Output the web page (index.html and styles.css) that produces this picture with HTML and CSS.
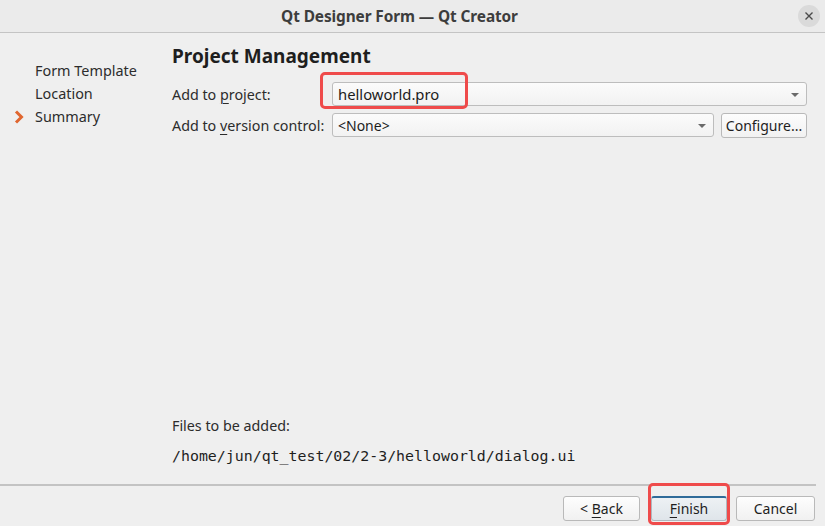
FILE: index.html
```html
<!DOCTYPE html>
<html>
<head>
<meta charset="utf-8">
<link rel="stylesheet" href="styles.css">
</head>
<body>
<div class="window">
  <header class="titlebar">
    <span class="spacer"></span>
    <span class="title">Qt Designer Form — Qt Creator</span>
    <span class="close">
      <svg width="10" height="10" viewBox="0 0 10 10"><path d="M1.5 1.5 L8.5 8.5 M8.5 1.5 L1.5 8.5" stroke="#4a4a4a" stroke-width="1.4" fill="none"/></svg>
    </span>
  </header>
  <div class="main">
    <nav class="sidebar">
      <div class="step">Form Template</div>
      <div class="step">Location</div>
      <div class="step current">
        <svg class="chev" width="10" height="14" viewBox="0 0 10 14"><path d="M2 1.5 L7.5 7 L2 12.5" stroke="#e0662f" stroke-width="3" fill="none" stroke-linejoin="miter"/></svg>
        Summary
      </div>
    </nav>
    <section class="content">
      <h1 class="heading">Project Management</h1>
      <div class="form">
        <div class="row">
          <label class="label">Add to <u>p</u>roject:</label>
          <div class="combo wide">
            <span>helloworld.pro</span>
            <span class="arrow"></span>
            <span class="mark mark-combo"></span>
          </div>
        </div>
        <div class="row">
          <label class="label">Add to <u>v</u>ersion control:</label>
          <div class="combo">
            <span>&lt;None&gt;</span>
            <span class="arrow"></span>
          </div>
          <button class="btn configure">Configure...</button>
        </div>
      </div>
      <div class="files">
        <div class="files-label">Files to be added:</div>
        <div class="path">/home/jun/qt_test/02/2-3/helloworld/dialog.ui</div>
      </div>
    </section>
  </div>
  <footer class="footer">
    <button class="btn">&lt; <u>B</u>ack</button>
    <button class="btn default"><u>F</u>inish<span class="mark mark-finish"></span></button>
    <button class="btn">Cancel</button>
  </footer>
</div>
</body>
</html>
```

FILE: styles.css
```css
* { box-sizing: border-box; }
html, body {
  margin: 0;
  padding: 0;
  width: 825px;
  height: 526px;
  overflow: hidden;
  background: #efefef;
  font-family: "Noto Sans", "DejaVu Sans", sans-serif;
  color: #2c2c2c;
}
.window {
  display: flex;
  flex-direction: column;
  height: 526px;
}
.titlebar {
  height: 33px;
  flex: none;
  background: #ebebeb;
  border-bottom: 1px solid #c4c4c4;
  display: grid;
  grid-template-columns: 1fr auto 1fr;
  align-items: center;
}
.title {
  font-weight: bold;
  font-size: 15.4px;
  color: #3d3d3d;
  letter-spacing: -0.1px;
  padding-top: 1px;
  margin-right: 26px;
}
.close {
  justify-self: end;
  margin-right: 5px;
  width: 22px;
  height: 22px;
  border-radius: 50%;
  background: #dadada;
  display: flex;
  align-items: center;
  justify-content: center;
}
.main {
  flex: 1;
  display: flex;
  min-height: 0;
}
.sidebar {
  width: 172px;
  flex: none;
  padding-top: 26px;
  font-size: 14.4px;
}
.step {
  position: relative;
  height: 23px;
  line-height: 23px;
  padding-left: 35px;
  color: #2c2c2c;
}
.chev {
  position: absolute;
  left: 14px;
  top: 5px;
}
.content {
  flex: 1;
  display: flex;
  flex-direction: column;
  padding-right: 18px;
}
.heading {
  margin: 10px 0 0 0;
  font-size: 19px;
  line-height: 26px;
  font-weight: bold;
  color: #1e1e1e;
}
.form {
  margin-top: 13px;
  display: flex;
  flex-direction: column;
  gap: 7px;
}
.row {
  display: flex;
  align-items: center;
  height: 24px;
}
.label {
  width: 160px;
  flex: none;
  font-size: 14.3px;
}
.label u { text-decoration-thickness: 1px; text-underline-offset: 3px; }
.combo {
  position: relative;
  flex: 1;
  height: 24px;
  border: 1px solid #bdbdbd;
  border-radius: 3px;
  background: linear-gradient(#fbfbfb, #f2f2f2);
  display: flex;
  align-items: center;
  padding-left: 5px;
  font-size: 14px;
  color: #1c1c1c;
}
.combo.wide span:first-child { font-size: 14.8px; }
.arrow {
  position: absolute;
  right: 7px;
  top: 10px;
  width: 0;
  height: 0;
  border-left: 4px solid transparent;
  border-right: 4px solid transparent;
  border-top: 4px solid #6a6a6a;
}
.btn {
  position: relative;
  height: 25px;
  border: 1px solid #b9b9b9;
  border-radius: 3px;
  background: linear-gradient(#fdfdfd, #f1f1f1);
  font-family: inherit;
  font-size: 14px;
  color: #1e1e1e;
  padding: 0 6px;
  cursor: default;
}
.configure {
  margin-left: 7px;
  width: 86px;
  height: 25px;
  padding: 0 2px;
}
.files {
  margin-top: auto;
  padding-bottom: 18px;
}
.files-label {
  font-size: 14.3px;
  line-height: 20px;
}
.path {
  margin-top: 10px;
  font-family: "DejaVu Sans Mono", monospace;
  font-size: 14.9px;
  line-height: 20px;
  color: #1e1e1e;
}
.footer {
  flex: none;
  height: 42px;
  margin-right: 9px;
  border-top: 2px solid #c3c3c3;
  display: flex;
  justify-content: flex-end;
  align-items: flex-start;
  padding-top: 10px;
  gap: 0;
}
.footer .btn:nth-child(1) { width: 77px; margin-right: 11px; }
.footer .btn:nth-child(2) { width: 76px; margin-right: 9px; }
.footer .btn:nth-child(3) { width: 79px; margin-right: 1px; }
.btn.default {
  border-top: 2px solid #2f6b99;
  background: linear-gradient(#edf1f4, #dfe5ea);
  border-color: #b0b8bf;
  border-top-color: #2f6b99;
  padding-bottom: 1px;
}
.btn u { text-decoration-thickness: 1px; text-underline-offset: 3px; }
.mark {
  position: absolute;
  border: 3px solid #ef4b4b;
  border-radius: 5px;
  pointer-events: none;
}
.mark-combo {
  left: -13px;
  top: -11px;
  width: 148px;
  height: 37px;
}
.mark-finish {
  left: -4px;
  top: -15px;
  width: 82px;
  height: 42px;
}
```
